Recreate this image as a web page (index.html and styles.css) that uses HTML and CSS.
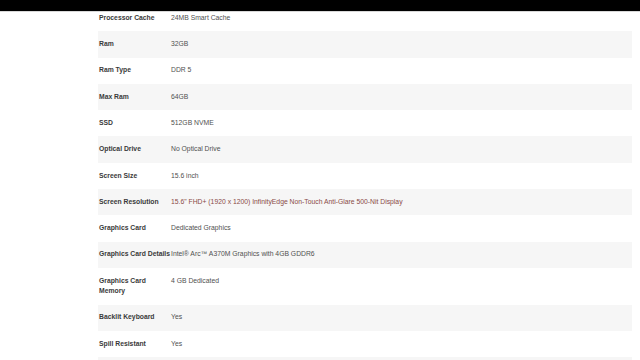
FILE: index.html
```html
<!DOCTYPE html>
<html>
<head>
<meta charset="utf-8">
<link rel="stylesheet" href="styles.css">
</head>
<body>
<div class="topbar"></div>
<main class="page">
  <table class="specs">
    <tr><th>Processor Cache</th><td>24MB Smart Cache</td></tr>
    <tr class="alt"><th>Ram</th><td>32GB</td></tr>
    <tr><th>Ram Type</th><td>DDR 5</td></tr>
    <tr class="alt"><th>Max Ram</th><td>64GB</td></tr>
    <tr><th>SSD</th><td>512GB NVME</td></tr>
    <tr class="alt"><th>Optical Drive</th><td>No Optical Drive</td></tr>
    <tr><th>Screen Size</th><td>15.6 inch</td></tr>
    <tr class="alt"><th>Screen Resolution</th><td class="link">15.6" FHD+ (1920 x 1200) InfinityEdge Non-Touch Anti-Glare 500-Nit Display</td></tr>
    <tr><th>Graphics Card</th><td>Dedicated Graphics</td></tr>
    <tr class="alt"><th>Graphics Card Details</th><td>Intel® Arc™ A370M Graphics with 4GB GDDR6</td></tr>
    <tr><th>Graphics Card Memory</th><td>4 GB Dedicated</td></tr>
    <tr class="alt"><th>Backlit Keyboard</th><td>Yes</td></tr>
    <tr><th>Spill Resistant</th><td>Yes</td></tr>
    <tr class="alt empty"><th></th><td></td></tr>
  </table>
</main>
</body>
</html>
```
FILE: styles.css
```css
html, body {
  margin: 0;
  padding: 0;
  background: #ffffff;
  overflow: hidden;
}
body {
  font-family: "Liberation Sans", Arial, sans-serif;
  width: 640px;
  height: 360px;
}
.topbar {
  position: fixed;
  top: 0;
  left: 0;
  right: 0;
  height: 11px;
  background: #000;
  border-bottom: 1px solid #d8d8d8;
  z-index: 10;
}
.page {
  padding: 5px 8px 0 98px;
}
.specs {
  width: 534px;
  border-collapse: collapse;
  font-size: 6.8px;
  line-height: 10.5px;
}
.specs tr {
  background: #ffffff;
}
.specs tr.alt {
  background: #f6f6f6;
}
.specs tr.empty {
  height: 26px;
}
.specs th {
  width: 72px;
  padding: 7.9px 0 7.9px 1px;
  text-align: left;
  vertical-align: top;
  font-weight: bold;
  color: #3a3a3a;
}
.specs td {
  padding: 7.9px 0;
  vertical-align: top;
  color: #505050;
}
.specs td.link {
  color: #8a4b46;
}
```
